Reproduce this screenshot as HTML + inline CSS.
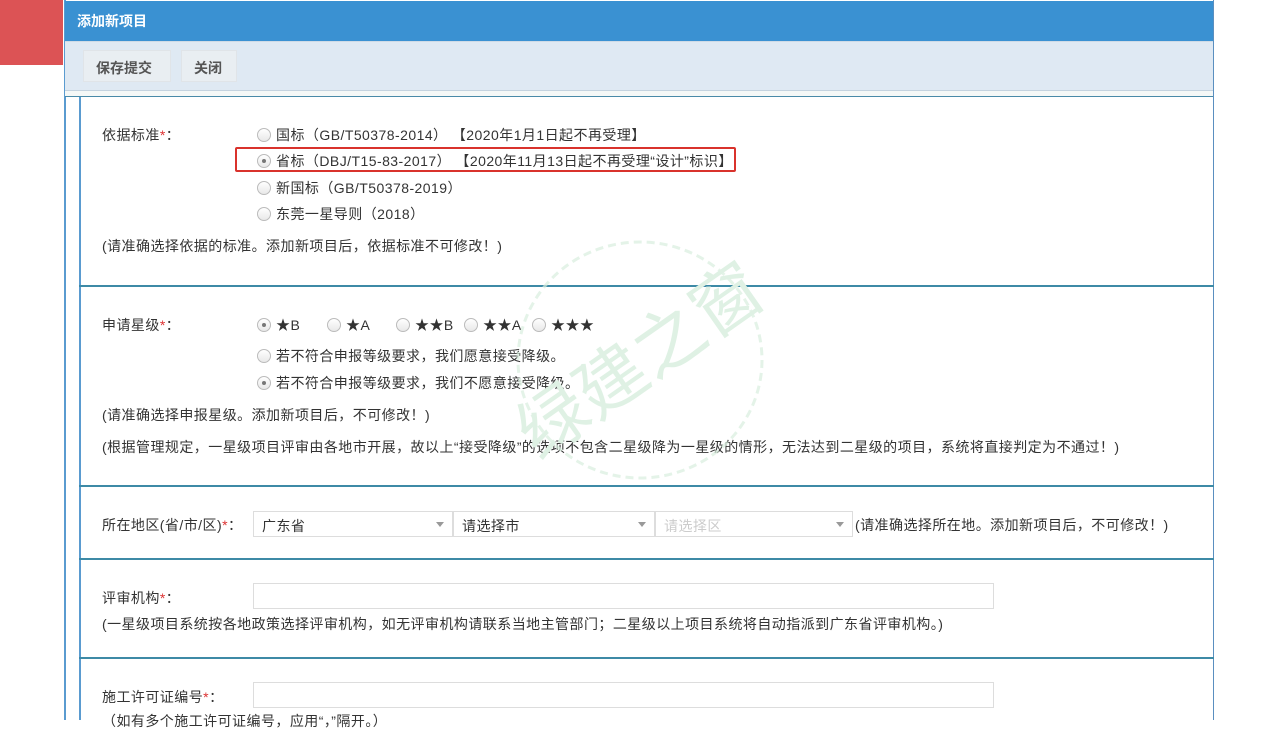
<!DOCTYPE html>
<html><head><meta charset="utf-8"><style>
*{margin:0;padding:0;box-sizing:border-box}
body{width:1280px;height:720px;background:#fff;position:relative;overflow:hidden;font-family:"Liberation Sans","Noto Sans CJK SC",sans-serif;font-size:14px;color:#333;letter-spacing:0.45px}
.a{position:absolute;white-space:nowrap}
.r{display:inline-block;width:14px;height:14px;border:1px solid #bbb;border-radius:50%;background:linear-gradient(#fff,#e8e8e8);vertical-align:-2px;margin-right:5px;position:relative}
.r.on::after{content:"";position:absolute;left:4px;top:4px;width:4px;height:4px;border-radius:50%;background:#777}
.s{color:#d33}
.hr{position:absolute;left:79px;width:1135px;height:2px;background:#3d8aa6}
.in{position:absolute;height:26px;border:1px solid #ddd;background:#fff}
.sel{position:absolute;height:26px;border:1px solid #ddd;background:#fff;padding:4px 8px;font-size:14px}
.sel::after{content:"";position:absolute;right:8px;top:10px;border:4px solid transparent;border-top:5px solid #999}
</style></head><body>
<div class="a" style="left:0;top:0;width:63px;height:65px;background:#dc5355"></div>
<div class="a" style="left:64px;top:0;width:1150px;height:720px;border-left:2px solid #5a9bd0;border-right:1px solid #5a8fc0"></div>
<div class="a" style="left:65px;top:1px;width:1148px;height:40px;background:#3a91d2;color:#fff;font-weight:bold;font-size:14px;padding:10px 12px;letter-spacing:0">添加新项目</div>
<div class="a" style="left:65px;top:41px;width:1148px;height:50px;background:#dfe9f3;border-top:1px solid #cfdbe6;border-bottom:1px solid #c5d3df"></div>
<div class="a" style="left:83px;top:50px;width:88px;height:32px;background:#e9eef2;border:1px solid #e0e4e8;font-weight:bold;color:#555;padding:7px 12px;letter-spacing:0">保存提交</div>
<div class="a" style="left:181px;top:50px;width:56px;height:32px;background:#e9eef2;border:1px solid #e0e4e8;font-weight:bold;color:#555;padding:7px 12px;letter-spacing:0">关闭</div>
<div class="a" style="left:65px;top:91px;width:1148px;height:6px;background:#f5f8f7;border-bottom:1px solid #4a8aa8"></div>
<div class="a" style="left:79px;top:97px;width:2px;height:623px;background:#5a9bd0"></div>

<div class="a" style="left:102px;top:125px">依据标准<span class="s">*</span>：</div>
<div class="a" style="left:257px;top:125px"><span class="r"></span>国标（GB/T50378-2014） 【2020年1月1日起不再受理】</div>
<div class="a" style="left:235px;top:147px;width:501px;height:25px;border:2px solid #d9322c;border-radius:2px"></div>
<div class="a" style="left:257px;top:151px"><span class="r on"></span>省标（DBJ/T15-83-2017） 【2020年11月13日起不再受理“设计”标识】</div>
<div class="a" style="left:257px;top:178px"><span class="r"></span>新国标（GB/T50378-2019）</div>
<div class="a" style="left:257px;top:204px"><span class="r"></span>东莞一星导则（2018）</div>
<div class="a" style="left:102px;top:236px">(请准确选择依据的标准。添加新项目后，依据标准不可修改！)</div>
<div class="hr" style="top:285px"></div>

<div class="a" style="left:102px;top:315px">申请星级<span class="s">*</span>：</div>
<div class="a" style="left:257px;top:315px"><span class="r on"></span>★B</div>
<div class="a" style="left:327px;top:315px"><span class="r"></span>★A</div>
<div class="a" style="left:396px;top:315px"><span class="r"></span>★★B</div>
<div class="a" style="left:464px;top:315px"><span class="r"></span>★★A</div>
<div class="a" style="left:532px;top:315px"><span class="r"></span>★★★</div>
<div class="a" style="left:257px;top:346px"><span class="r"></span>若不符合申报等级要求，我们愿意接受降级。</div>
<div class="a" style="left:257px;top:373px"><span class="r on"></span>若不符合申报等级要求，我们不愿意接受降级。</div>
<div class="a" style="left:102px;top:405px">(请准确选择申报星级。添加新项目后，不可修改！)</div>
<div class="a" style="left:102px;top:437px">(根据管理规定，一星级项目评审由各地市开展，故以上“接受降级”的选项不包含二星级降为一星级的情形，无法达到二星级的项目，系统将直接判定为不通过！)</div>
<div class="hr" style="top:485px"></div>

<div class="a" style="left:102px;top:515px">所在地区(省/市/区)<span class="s">*</span>：</div>
<div class="sel" style="left:253px;top:511px;width:200px">广东省</div>
<div class="sel" style="left:453px;top:511px;width:202px">请选择市</div>
<div class="sel" style="left:655px;top:511px;width:198px;color:#ccc">请选择区</div>
<div class="a" style="left:855px;top:515px">(请准确选择所在地。添加新项目后，不可修改！)</div>
<div class="hr" style="top:558px"></div>

<div class="a" style="left:102px;top:588px">评审机构<span class="s">*</span>：</div>
<div class="in" style="left:253px;top:583px;width:741px"></div>
<div class="a" style="left:102px;top:614px">(一星级项目系统按各地政策选择评审机构，如无评审机构请联系当地主管部门；二星级以上项目系统将自动指派到广东省评审机构。)</div>
<div class="hr" style="top:657px"></div>

<div class="a" style="left:102px;top:687px">施工许可证编号<span class="s">*</span>：</div>
<div class="in" style="left:253px;top:682px;width:741px"></div>
<div class="a" style="left:102px;top:711px">（如有多个施工许可证编号，应用“，”隔开。）</div>

<svg class="a" style="left:500px;top:235px" width="280" height="250" viewBox="0 0 280 250"><ellipse cx="140" cy="125" rx="122" ry="118" fill="none" stroke="#d8eede" stroke-width="3" stroke-dasharray="8 5" opacity=".7"/><text x="140" y="150" font-size="70" fill="#dff1e4" text-anchor="middle" transform="rotate(-35 140 125)" font-family="Noto Sans CJK SC">绿建之窗</text></svg>
</body></html>
